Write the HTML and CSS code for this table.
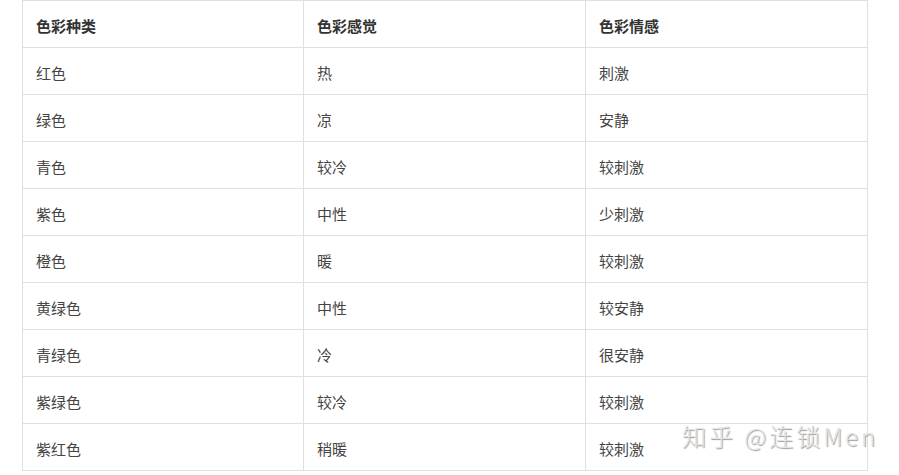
FILE: index.html
```html
<!DOCTYPE html>
<html lang="zh-CN">
<head>
<meta charset="utf-8">
<title>色彩情感</title>
<link rel="stylesheet" href="styles.css">
</head>
<body>
<div class="wrap">
  <table class="color-table">
    <colgroup>
      <col class="c1"><col class="c2"><col class="c3">
    </colgroup>
    <thead>
      <tr><th>色彩种类</th><th>色彩感觉</th><th>色彩情感</th></tr>
    </thead>
    <tbody>
      <tr><td>红色</td><td>热</td><td>刺激</td></tr>
      <tr><td>绿色</td><td>凉</td><td>安静</td></tr>
      <tr><td>青色</td><td>较冷</td><td>较刺激</td></tr>
      <tr><td>紫色</td><td>中性</td><td>少刺激</td></tr>
      <tr><td>橙色</td><td>暖</td><td>较刺激</td></tr>
      <tr><td>黄绿色</td><td>中性</td><td>较安静</td></tr>
      <tr><td>青绿色</td><td>冷</td><td>很安静</td></tr>
      <tr><td>紫绿色</td><td>较冷</td><td>较刺激</td></tr>
      <tr><td>紫红色</td><td>稍暖</td><td>较刺激</td></tr>
    </tbody>
  </table>
  <div class="watermark">知乎 @连锁Men</div>
</div>
</body>
</html>
```
FILE: styles.css
```css
html, body {
  margin: 0;
  padding: 0;
  background: #fff;
}
body {
  font-family: "Noto Sans CJK SC", "Noto Sans", sans-serif;
  font-size: 15px;
  color: #444;
}
.wrap {
  position: relative;
  width: 899px;
  height: 475px;
  overflow: hidden;
}
.color-table {
  margin-left: 22px;
  width: 846px;
  border-collapse: collapse;
  table-layout: fixed;
}
.c1 { width: 281px; }
.c2 { width: 282px; }
.c3 { width: 282px; }
.color-table th,
.color-table td {
  border: 1px solid #e0e0e0;
  height: 47px;
  padding: 3px 13px 0 13px;
  box-sizing: border-box;
  text-align: left;
  vertical-align: middle;
  line-height: 20px;
}
.color-table th {
  font-weight: bold;
  color: #333;
}
.watermark {
  position: absolute;
  left: 682px;
  top: 419px;
  font-family: "Noto Sans CJK SC", "Noto Sans", sans-serif;
  font-size: 24px;
  font-weight: 300;
  line-height: 34px;
  letter-spacing: 3px;
  color: #e4e4e4;
  text-shadow: 1px 1px 1px rgba(0,0,0,0.4);
  white-space: nowrap;
}
```
